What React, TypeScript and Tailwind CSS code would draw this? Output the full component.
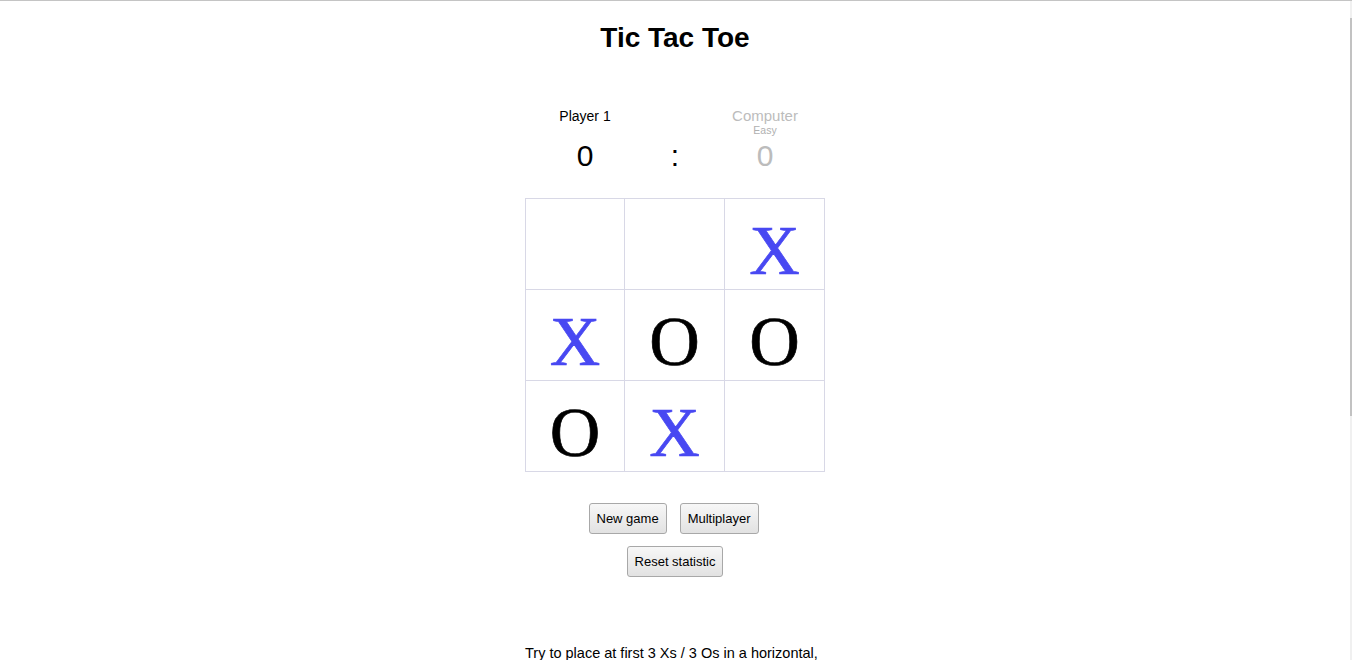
import React from "react";

type Mark = "X" | "O" | "";

const board: Mark[] = ["", "", "X", "X", "O", "O", "O", "X", ""];

function Cell({ mark }: { mark: Mark }) {
  return (
    <div className="h-[91px] border-r border-b border-[#d8d8e6] flex justify-center items-start pt-[17px]">
      {mark && (
        <span
          className={`font-['Liberation_Serif',serif] text-[70px] leading-[70px] [-webkit-text-stroke:0.7px] ${
            mark === "X" ? "text-[#4848f2]" : "text-black"
          }`}
        >
          {mark}
        </span>
      )}
    </div>
  );
}

function Button({ children }: { children: React.ReactNode }) {
  return (
    <button className="h-[31px] px-[7px] border border-[#a8a8a8] rounded-[3px] bg-gradient-to-b from-[#f7f7f7] to-[#e2e2e2] text-[13px] text-black">
      {children}
    </button>
  );
}

export default function App() {
  return (
    <div className="relative min-h-[660px] bg-white border-t border-[#c4c4c4] font-['Liberation_Sans',Arial,sans-serif] text-black overflow-hidden">
      <div className="flex flex-col items-center pr-[2px] pt-[22px]">
        <h1 className="text-[28px] leading-[30px] font-bold">Tic Tac Toe</h1>

        <div className="mt-[55px] grid grid-cols-[120px_60px_120px] w-[300px] text-center">
          <div className="flex flex-col">
            <div className="h-[31px] text-[14px] leading-[16px]">Player 1</div>
            <div className="text-[30px] leading-[34px]">0</div>
          </div>
          <div className="flex flex-col">
            <div className="h-[31px]" />
            <div className="text-[30px] leading-[34px]">:</div>
          </div>
          <div className="flex flex-col text-[#bcbcbc]">
            <div className="h-[31px]">
              <div className="text-[15px] leading-[16px]">Computer</div>
              <div className="text-[10.5px] leading-[12px] text-[#b0b0b0]">Easy</div>
            </div>
            <div className="text-[30px] leading-[34px]">0</div>
          </div>
        </div>

        <div className="mt-[25px] grid grid-cols-[99px_100px_100px] border-l border-t border-[#d8d8e6]">
          {board.map((m, i) => (
            <Cell key={i} mark={m} />
          ))}
        </div>

        <div className="mt-[31px] flex gap-[13px] pr-[3px]">
          <Button>New game</Button>
          <Button>Multiplayer</Button>
        </div>
        <div className="mt-3">
          <Button>Reset statistic</Button>
        </div>

        <p className="mt-[67px] w-[300px] text-[14.5px] leading-[18px]">
          Try to place at first 3 Xs / 3 Os in a horizontal, vertical or diagonal row.
        </p>
      </div>

      {/* overlay scrollbar */}
      <div className="absolute right-0 top-0 h-full w-[2px] bg-[#f0f0f0]" />
      <div className="absolute right-0 top-[17px] h-[398px] w-[2px] bg-[#c2c2c2]" />
    </div>
  );
}
